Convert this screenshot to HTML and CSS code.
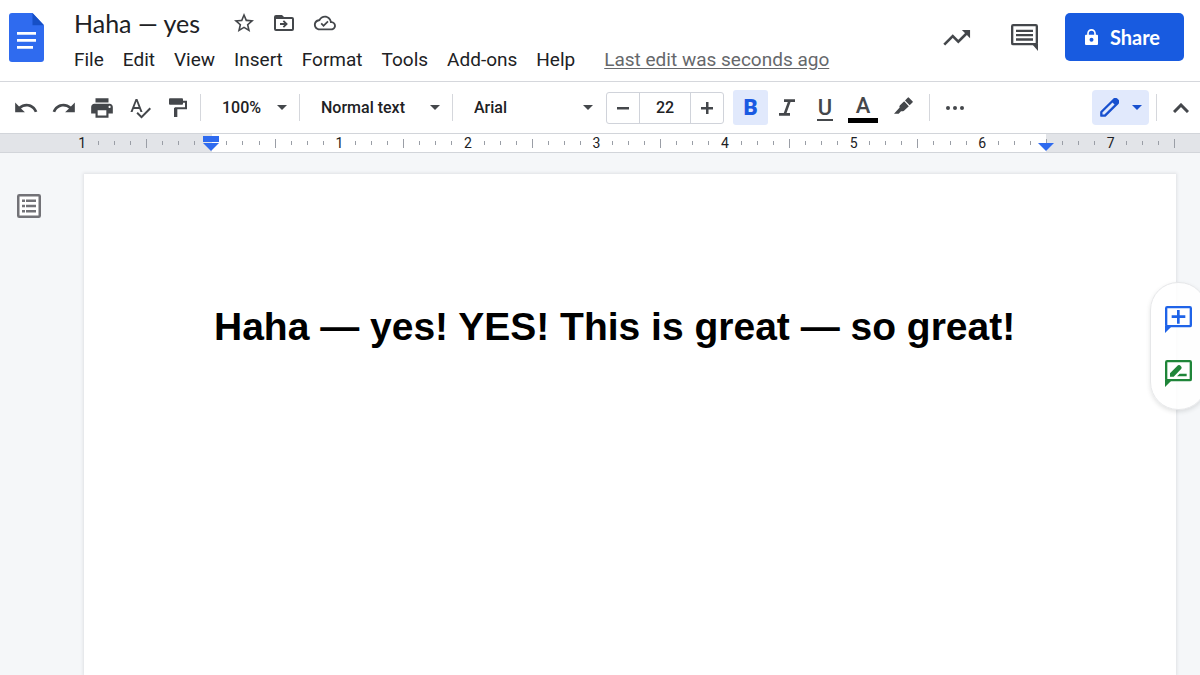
FILE: index.html
```html
<!DOCTYPE html>
<html lang="en">
<head>
<meta charset="utf-8">
<title>Haha — yes</title>
<meta name="viewport" content="width=device-width, initial-scale=1">
<link rel="stylesheet" href="styles.css">
</head>
<body class="app">
<header class="header">
  <a class="logo" href="#" aria-label="Docs home">
    <svg width="35" height="49" viewBox="0 0 35 49"><path fill="#2f6bef" d="M3 0h20.500L35 12.300V46a3 3 0 0 1-3 3H3a3 3 0 0 1-3-3V3a3 3 0 0 1 3-3z"/><path fill="#164fc6" d="M23.500 0v12.300H35z"/><path fill="#fff" d="M8 19h19v2.800H8zM8 26h19v2.800H8zM8 33h16v2.800H8z"/></svg>
  </a>
  <div class="heading">
    <div class="title-row">
      <input class="title" type="text" aria-label="Document name" value="Haha — yes">
      <button class="plain" aria-label="Star"><svg width="24" height="24" viewBox="0 0 24 24"><path d="M22 9.240l-7.190-.62L12 2 9.190 8.630 2 9.240l5.460 4.730L5.820 21 12 17.270 18.180 21l-1.630-7.030L22 9.240zM12 15.400l-3.760 2.270 1-4.280-3.320-2.880 4.380-.38L12 6.100l1.710 4.040 4.380.38-3.320 2.880 1 4.280L12 15.400z"/></svg></button>
      <button class="plain" aria-label="Move"><svg width="24" height="24" viewBox="0 0 24 24"><path fill-rule="evenodd" d="M4 4h6l2 2h8a2 2 0 0 1 2 2v10a2 2 0 0 1-2 2H4a2 2 0 0 1-2-2V6a2 2 0 0 1 2-2zM4 8v10h16V8z"/><path d="M8 12.100h4.300L10.700 10.500 12 9.200l3.900 3.800-3.900 3.800-1.300-1.300 1.600-1.600H8z"/></svg></button>
      <button class="plain" aria-label="Saved to cloud"><svg width="24" height="22" viewBox="-1 0 24 24"><path d="M19.350 10.040C18.670 6.590 15.640 4 12 4 9.110 4 6.600 5.640 5.350 8.040 2.340 8.360 0 10.910 0 14c0 3.310 2.690 6 6 6h13c2.760 0 5-2.240 5-5 0-2.640-2.050-4.780-4.650-4.960zM19 18H6c-2.210 0-4-1.790-4-4 0-2.050 1.530-3.760 3.560-3.970l1.070-.11.5-.95C8.080 7.140 9.940 6 12 6c2.620 0 4.880 1.860 5.390 4.430l.3 1.500 1.530.11c1.560.1 2.780 1.410 2.780 2.960 0 1.650-1.350 3-3 3z"/><path d="M10.500 16.300l-3.200-3.200 1.300-1.300 1.900 1.900 4.200-4.200 1.300 1.300z"/></svg></button>
    </div>
    <nav class="menu" aria-label="Menu bar">
      <button>File</button><button>Edit</button><button>View</button><button>Insert</button><button>Format</button><button>Tools</button><button>Add-ons</button><button>Help</button>
      <a class="last-edit" href="#">Last edit was seconds ago</a>
    </nav>
  </div>
  <div class="actions">
    <button class="plain" aria-label="Activity"><svg width="28" height="17" viewBox="128 84 84 52"><path fill="none" stroke="#44474b" stroke-width="8" d="M131 132l26-26 17 17 29-29"/><path d="M185 87h25v25z"/></svg></button>
    <button class="plain" aria-label="Comments"><svg width="27" height="27" viewBox="333 70 81 81"><rect x="336.500" y="73.500" width="74" height="57" rx="3" fill="none" stroke="#44474b" stroke-width="7"/><path d="M396 130h18v21zM348 87h51v7h-51zM348 100h51v7h-51zM348 113h51v7h-51z"/></svg></button>
    <button class="share"><svg width="13" height="16" viewBox="0 0 39 48"><path fill="none" stroke="#fff" stroke-width="5" d="M9 20v-7a10.500 10.500 0 0 1 21 0v7"/><path fill="#fff" fill-rule="evenodd" d="M3 17h33a3 3 0 0 1 3 3v25a3 3 0 0 1-3 3H3a3 3 0 0 1-3-3V20a3 3 0 0 1 3-3zM19.500 26a6 6 0 1 0 0 12 6 6 0 0 0 0-12z"/></svg>Share</button>
  </div>
</header>

<div class="toolbar" role="toolbar" aria-label="Formatting">
  <button class="tool" aria-label="Undo"><svg width="26" height="26" viewBox="0 0 24 24"><path d="M12.500 8c-2.650 0-5.050.99-6.900 2.600L2 7v9h9l-3.620-3.620c1.390-1.160 3.160-1.880 5.120-1.880 3.540 0 6.550 2.310 7.600 5.500l2.370-.78C21.080 11.030 17.150 8 12.500 8z"/></svg></button>
  <button class="tool" aria-label="Redo"><svg width="26" height="26" viewBox="0 0 24 24"><path d="M18.400 10.600C16.550 8.990 14.150 8 11.500 8c-4.650 0-8.580 3.030-9.960 7.220L3.900 16c1.050-3.190 4.050-5.500 7.600-5.500 1.950 0 3.730.72 5.120 1.880L13 16h9V7l-3.600 3.600z"/></svg></button>
  <button class="tool" aria-label="Print"><svg width="26" height="26" viewBox="0 0 24 24"><path d="M19 8H5c-1.660 0-3 1.340-3 3v6h4v4h12v-4h4v-6c0-1.660-1.340-3-3-3zm-3 11H8v-5h8v5zm3-7c-.55 0-1-.45-1-1s.45-1 1-1 1 .45 1 1-.45 1-1 1zm-1-9H6v4h12V3z"/></svg></button>
  <button class="tool" aria-label="Spelling"><svg width="24" height="24" viewBox="0 0 24 24"><path d="M12.450 16h2.090L9.430 3H7.570L2.460 16h2.090l1.120-3h5.640l1.140 3zm-6.020-5L8.500 5.480 10.570 11H6.430zm15.160.59l-8.090 8.090L9.830 16l-1.410 1.410 5.090 5.090L23 13l-1.410-1.410z"/></svg></button>
  <button class="tool" aria-label="Paint format"><svg width="18" height="19" viewBox="0 0 54 57"><path d="M3 1h36a3 3 0 0 1 3 3v13a3 3 0 0 1-3 3H3a3 3 0 0 1-3-3V4a3 3 0 0 1 3-3z"/><path fill="none" stroke="#44474b" stroke-width="6" d="M41 11h10v20H20v4"/><path d="M15 30h10v27H15z"/></svg></button>
  <span class="sep sep-first"></span>
  <label class="pick pick-zoom"><select aria-label="Zoom"><option>100%</option></select><svg class="caret" width="10" height="5" viewBox="0 0 10 5"><path d="M0 0h10L5 5z"/></svg></label>
  <span class="sep"></span>
  <label class="pick"><select aria-label="Styles"><option>Normal text</option></select><svg class="caret" width="10" height="5" viewBox="0 0 10 5"><path d="M0 0h10L5 5z"/></svg></label>
  <span class="sep"></span>
  <label class="pick"><select aria-label="Font"><option>Arial</option></select><svg class="caret" width="10" height="5" viewBox="0 0 10 5"><path d="M0 0h10L5 5z"/></svg></label>
  <div class="size">
    <button aria-label="Decrease font size"><svg width="12" height="12" viewBox="0 0 12 12"><path d="M0 5h12v2.500H0z"/></svg></button>
    <input type="text" aria-label="Font size" value="22">
    <button aria-label="Increase font size"><svg width="12" height="12" viewBox="0 0 12 12"><path d="M0 5h5V0h2.500v5H12v2.500H7.500V12H5V7.500H0z"/></svg></button>
  </div>
  <button class="tool tool-on" aria-pressed="true" aria-label="Bold">B</button>
  <button class="tool" aria-label="Italic"><svg width="16" height="17" viewBox="0 0 48 51"><path fill="none" stroke="#44474b" stroke-width="8" d="M15 5h33M0 46h33M32 5L17 46"/></svg></button>
  <button class="tool" aria-label="Underline"><span class="letter letter-u">U</span></button>
  <button class="tool" aria-label="Text color"><span class="letter letter-a">A</span></button>
  <button class="tool tool-marker" aria-label="Highlight color"><svg width="19" height="17" viewBox="0 0 57 50"><path d="M41 1.500q2-2 4 0L55.500 12q2 2 0 4L47 24.500 33 10zM30.500 12.500L44.500 27 30 41q-1 1-3 1h-6l-7 8H0l17-19q-2-4 1-7z"/></svg></button>
  <span class="sep sep-more"></span>
  <button class="tool tool-more" aria-label="More"><svg width="18" height="4" viewBox="0 0 18 4"><circle cx="2" cy="2" r="2"/><circle cx="9" cy="2" r="2"/><circle cx="16" cy="2" r="2"/></svg></button>
  <button class="mode" aria-label="Editing mode"><svg width="19" height="19" viewBox="0 0 57 57"><path fill="none" stroke="#1850cf" stroke-width="7" stroke-linejoin="round" d="M4 53V42L42 4.500q4-3 8 0l3 3q3 4 0 8L15 53z"/><path d="M35 11l11-9 9 9-9 11z"/></svg><svg width="10" height="5" viewBox="0 0 10 5"><path d="M0 0h10L5 5z"/></svg></button>
  <span class="sep sep-mode"></span>
  <button class="tool tool-hide" aria-label="Hide the menus"><svg width="16" height="10" viewBox="0 0 16 10"><path fill="none" stroke="#44474b" stroke-width="3" d="M1 9l7-7 7 7"/></svg></button>
</div>

<div class="ruler">
  <div class="scale">
    <i></i><i></i><i></i><i></i><b>1</b><i></i><i></i><i></i>
    <i></i><i></i><i></i><i></i><b></b><i></i><i></i><i></i>
    <i></i><i></i><i></i><i></i><b>1</b><i></i><i></i><i></i>
    <i></i><i></i><i></i><i></i><b>2</b><i></i><i></i><i></i>
    <i></i><i></i><i></i><i></i><b>3</b><i></i><i></i><i></i>
    <i></i><i></i><i></i><i></i><b>4</b><i></i><i></i><i></i>
    <i></i><i></i><i></i><i></i><b>5</b><i></i><i></i><i></i>
    <i></i><i></i><i></i><i></i><b>6</b><i></i><i></i><i></i>
    <i></i><i></i><i></i><i></i><b>7</b><i></i><i></i><i></i>
    <i></i>
  </div>
  <svg class="indent indent-left" width="16" height="15" viewBox="0 0 16 15"><path d="M0 0h16v6H0zM0 7h16l-8 8z"/></svg>
  <svg class="indent indent-right" width="16" height="8" viewBox="0 0 16 8"><path d="M0 0h16L8 8z"/></svg>
</div>

<main class="workspace">
  <button class="plain outline" aria-label="Show document outline"><svg width="24" height="24" viewBox="0 0 24 24"><rect x="1.250" y="1.250" width="21.500" height="21.500" rx="1" fill="#fff" stroke="#727277" stroke-width="2.500"/><path fill="#727277" d="M5 5.500h3v2.500H5zM9 5.500h10v2.500H9zM5 10.800h3v2.500H5zM9 10.800h10v2.500H9zM5 16h3v2.500H5zM9 16h10v2.500H9z"/></svg></button>
  <article class="page"><h1 class="text">Haha — yes! YES! This is great — so great!</h1></article>
  <aside class="side">
    <button class="plain" aria-label="Add comment"><svg width="27" height="27" viewBox="0 0 81 81"><rect x="3.500" y="3.500" width="74" height="57" rx="3" fill="#fff" stroke="#1f63e8" stroke-width="7"/><path fill="#1f63e8" d="M0 60h21L0 81zM36 12h8v16h17v8H44v17h-8V36H20v-8h16z"/></svg></button>
    <button class="plain" aria-label="Suggest edits"><svg width="27" height="27" viewBox="0 0 81 81"><rect x="3.500" y="3.500" width="74" height="57" rx="3" fill="#fff" stroke="#1f8539" stroke-width="7"/><path fill="#1f8539" d="M0 60h21L0 81zM15 50V40l24-24q3-2 6 0l4 4q2 3 0 6L26 50zM36 49l8-8h21v8z"/></svg></button>
  </aside>
</main>
</body>
</html>
```

FILE: styles.css
```css
* {
  box-sizing: border-box;
}

.app {
  margin: 0;
  min-height: 100vh;
  display: flex;
  flex-direction: column;
  overflow: hidden;
  background: #f5f7f9;
  color: #202124;
  font-family: Roboto, Arial, sans-serif;
}

button,
input,
select {
  margin: 0;
  padding: 0;
  border: 0;
  background: none;
  color: inherit;
  font: inherit;
}

svg {
  display: block;
  flex: none;
  fill: #44474b;
}

.plain {
  display: flex;
}

.header {
  display: flex;
  align-items: flex-start;
  height: 82px;
  padding: 0 16px 0 9px;
  border-bottom: 1px solid #d5d7dc;
  background: #fff;
}

.logo {
  margin-top: 13px;
}

.heading {
  margin-left: 30px;
  padding-top: 7px;
}

.title-row {
  display: flex;
  align-items: center;
  gap: 16px;
  height: 32px;
}

.title {
  width: 142px;
  height: 32px;
  font-family: Lato, sans-serif;
  font-size: 25px;
  line-height: 32px;
}

.menu {
  display: flex;
  gap: 19px;
  margin-top: 9px;
  font-size: 19px;
  line-height: 24px;
  white-space: nowrap;
}

.last-edit {
  margin-left: 10px;
  color: #66686b;
  text-underline-offset: 2px;
}

.actions {
  display: flex;
  align-items: center;
  height: 48px;
  margin: 13px 0 0 auto;
}

.actions .plain {
  margin-right: 40px;
}

.actions .plain + .plain {
  margin-right: 27px;
}

.share {
  display: flex;
  align-items: center;
  justify-content: center;
  gap: 12px;
  width: 119px;
  height: 48px;
  padding-right: 4px;
  border-radius: 5px;
  background: #185be0;
  color: #fff;
  font-family: Lato, sans-serif;
  font-size: 20px;
  font-weight: 700;
}

.toolbar {
  display: flex;
  align-items: center;
  height: 51px;
  padding: 0 0 0 7px;
  background: #fff;
  font-size: 16px;
  font-weight: 500;
}

.tool {
  display: flex;
  align-items: center;
  justify-content: center;
  width: 38px;
  height: 35px;
}

.sep {
  width: 1px;
  height: 27px;
  background: #d5d7dc;
}

.sep-first {
  margin-left: 3px;
}

.pick {
  display: grid;
  align-items: center;
  width: 152px;
}

.pick-zoom {
  width: 98px;
}

.pick select {
  grid-area: 1 / 1;
  appearance: none;
  width: 100%;
  height: 35px;
  padding-left: 21px;
}

.caret {
  grid-area: 1 / 1;
  justify-self: end;
  margin-right: 12px;
  pointer-events: none;
}

.size {
  display: flex;
  width: 118px;
  height: 32px;
  margin: 0 9px 0 1px;
  border: 1px solid #d0d3da;
  border-radius: 3px;
}

.size button {
  display: grid;
  place-items: center;
  width: 32px;
}

.size input {
  flex: 1;
  min-width: 0;
  border: solid #d0d3da;
  border-width: 0 1px;
  text-align: center;
}

.tool-on {
  width: 35px;
  border-radius: 3px;
  background: #e1e9fc;
  color: #1a5ae2;
  font-size: 22px;
  font-weight: 900;
}

.letter {
  color: #44474b;
  font-size: 22px;
  font-weight: 500;
}

.letter-u {
  width: 16px;
  margin-top: 3px;
  border-bottom: 2px solid #44474b;
  line-height: 22px;
}

.letter-a {
  width: 30px;
  margin-top: 1px;
  border-bottom: 5px solid #000;
  line-height: 24px;
}

.tool-marker {
  padding: 0 0 4px 4px;
}

.sep-more {
  margin-left: 9px;
}

.tool-more {
  width: 50px;
}

.mode {
  display: flex;
  align-items: center;
  justify-content: center;
  gap: 13px;
  width: 57px;
  height: 35px;
  margin-left: auto;
  border-radius: 4px;
  background: #e1e9fc;
}

.mode svg {
  fill: #1850cf;
}

.sep-mode {
  margin: 0 5px 0 7px;
}

.ruler {
  position: relative;
  height: 20px;
  border: solid #d2d5da;
  border-width: 1px 0;
  background: linear-gradient(90deg, #e2e4e8 212px, #fff 212px, #fff calc(100% - 154px), #e2e4e8 calc(100% - 154px));
}

.scale {
  display: grid;
  grid-template-columns: repeat(73, minmax(0, 1fr));
  place-items: center;
  height: 100%;
  margin: 0 17px 0 10px;
}

.scale i {
  width: 1px;
  height: 4px;
  background: #9a9ea6;
}

.scale i:nth-child(8n + 1) {
  height: 9px;
}

.scale i:first-child,
.scale i:nth-child(2),
.scale i:nth-child(3),
.scale i:nth-child(4) {
  background: none;
}

.scale b {
  font-size: 14px;
  font-weight: 400;
  line-height: 18px;
}

.indent {
  position: absolute;
  bottom: 1px;
  fill: #2f6bef;
}

.indent-left {
  left: 203px;
}

.indent-right {
  right: 146px;
}

.workspace {
  position: relative;
  display: flex;
  flex: 1;
  align-items: stretch;
  overflow: hidden;
}

.outline {
  align-self: flex-start;
  margin: 41px 43px 0 17px;
}

.page {
  flex: 1;
  margin: 21px 24px 0 0;
  padding: 129px 0 0 130px;
  background: #fff;
  box-shadow: 0 0 3px 1px #dfe1e4;
}

.text {
  margin: 0;
  color: #000;
  font-family: Arial, "Liberation Sans", sans-serif;
  font-size: 39px;
  font-weight: 700;
  line-height: 48px;
}

.side {
  position: absolute;
  top: 129px;
  right: -7px;
  display: flex;
  flex-direction: column;
  align-items: center;
  gap: 27px;
  width: 57px;
  padding: 23px 0 22px;
  border: 1px solid #e6e7e9;
  border-radius: 28px;
  background: rgba(255, 255, 255, .85);
  box-shadow: 0 2px 4px rgba(60, 64, 67, .15);
}
```
